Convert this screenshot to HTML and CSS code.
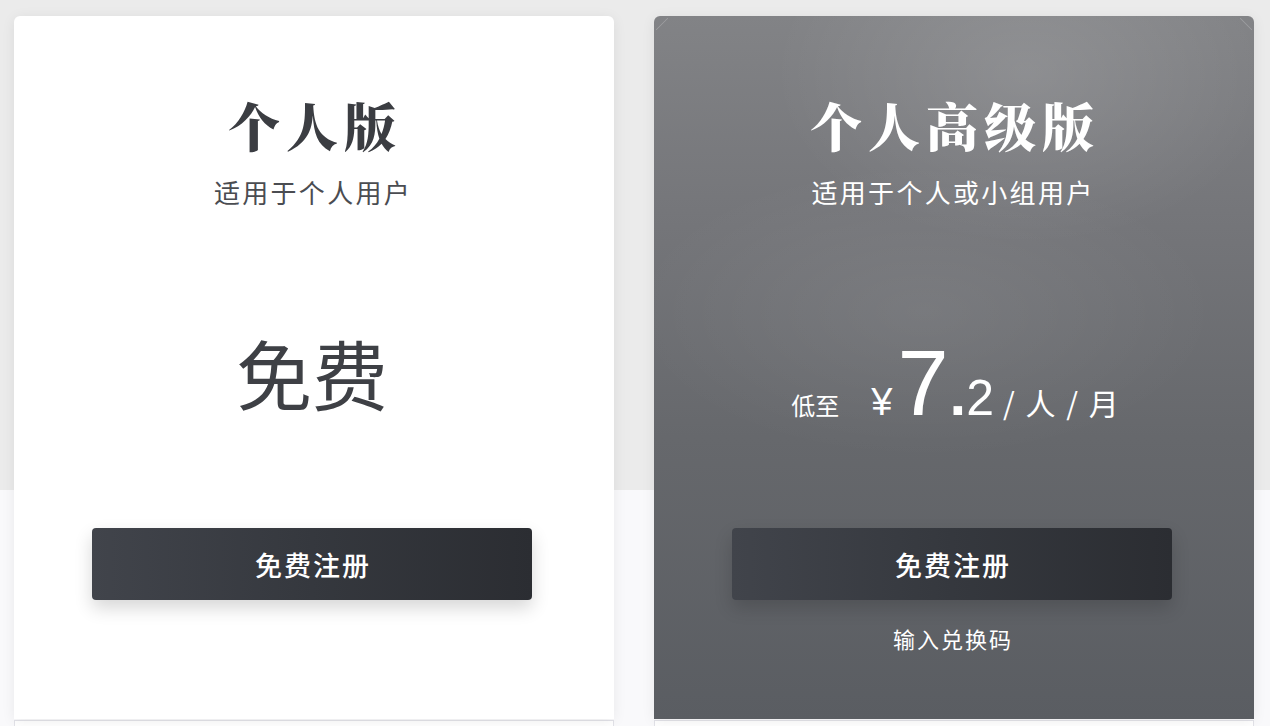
FILE: index.html
```html
<!DOCTYPE html>
<html lang="zh-CN">
<head>
<meta charset="utf-8">
<title>价格</title>
<link rel="stylesheet" href="styles.css">
</head>
<body>
<div class="page">
  <div class="plans">
    <div class="card card-light">
      <h2 class="title">个人版</h2>
      <p class="subtitle">适用于个人用户</p>
      <div class="price">
        <span class="free">免费</span>
      </div>
      <button class="btn">免费注册</button>
    </div>
    <div class="card card-dark">
      <span class="corner tl"></span><span class="corner tr"></span>
      <h2 class="title">个人高级版</h2>
      <p class="subtitle">适用于个人或小组用户</p>
      <div class="price">
        <span class="from">低至</span>
        <span class="yen">¥</span><span class="int">7</span><span class="dot">.</span><span class="dec">2</span>
        <span class="unit">/ 人 / 月</span>
      </div>
      <button class="btn">免费注册</button>
      <a class="redeem" href="#">输入兑换码</a>
    </div>
  </div>
  <div class="below">
    <div class="below-box"></div>
    <div class="below-box"></div>
  </div>
</div>
</body>
</html>
```
FILE: styles.css
```css
* { box-sizing: border-box; }
html, body { margin: 0; padding: 0; }
body {
  font-family: "Noto Sans CJK SC", "Noto Sans", sans-serif;
  background: linear-gradient(180deg, #ebebeb 0, #ebebeb 490px, #f9f9fb 490px, #f9f9fb 100%);
  min-height: 726px;
  overflow: hidden;
}
.page { padding: 16px 16px 0 14px; }
.plans {
  display: flex;
  gap: 40px;
}
.card {
  position: relative;
  width: 600px;
  height: 703px;
  border-radius: 6px 6px 0 0;
  display: flex;
  flex-direction: column;
  align-items: center;
  padding: 79px 4px 0 0;
  box-shadow: 0 2px 14px rgba(0, 0, 0, 0.07);
}
.card-light { background: #ffffff; color: #3b3d42; }
.card-dark {
  color: #ffffff;
  background:
    radial-gradient(ellipse 60% 35% at 62% 8%, rgba(255,255,255,0.12), rgba(255,255,255,0) 70%),
    radial-gradient(ellipse 70% 30% at 45% 42%, rgba(255,255,255,0.07), rgba(255,255,255,0) 70%),
    linear-gradient(180deg, #828386 0%, #747579 30%, #66686c 60%, #5a5d62 100%);
}
.corner {
  position: absolute;
  top: 2px;
  width: 12px;
  height: 12px;
}
.corner.tl { left: 2px; background: linear-gradient(135deg, transparent 45%, rgba(255,255,255,0.18) 50%, transparent 55%); }
.corner.tr { right: 2px; background: linear-gradient(45deg, transparent 45%, rgba(255,255,255,0.18) 50%, transparent 55%); }
.title {
  margin: 0;
  font-family: "Noto Serif CJK SC", "Noto Serif SC", "Noto Sans CJK SC", serif;
  font-weight: 900;
  font-size: 52px;
  line-height: 60px;
  letter-spacing: 6px;
  text-indent: 6px;
}
.subtitle {
  margin: 19px 0 0;
  font-size: 26px;
  line-height: 36px;
  letter-spacing: 2.3px;
  text-indent: 2px;
  font-weight: 400;
}
.card-light .subtitle { color: #4a4c51; }
.price {
  margin-top: 120px;
  height: 90px;
  display: flex;
  align-items: center;
  justify-content: center;
}
.free {
  font-size: 76px;
  line-height: 90px;
  font-weight: 400;
  color: #3e4045;
  margin-top: -6px;
}
.card-dark .price { align-items: baseline; padding-top: 8px; padding-left: 6px; }
.from { font-size: 24px; margin-right: 32px; }
.yen { font-family: "Liberation Sans", sans-serif; font-size: 38px; margin-right: 5px; }
.int { font-family: "Liberation Sans", sans-serif; font-size: 92px; line-height: 90px; }
.dot { font-family: "Liberation Sans", sans-serif; font-size: 60px; font-weight: 700; margin-left: 1px; }
.dec { font-family: "Liberation Sans", sans-serif; font-size: 50px; }
.unit { font-size: 30px; margin-left: 9px; word-spacing: 4px; }
.btn {
  margin-top: 108px;
  width: 440px;
  height: 72px;
  border: 0;
  border-radius: 4px;
  background: linear-gradient(90deg, #41444b 0%, #35383e 50%, #2b2d32 100%);
  color: #ffffff;
  font-family: "Noto Sans CJK SC", sans-serif;
  font-size: 27px;
  font-weight: 500;
  letter-spacing: 2px;
  text-indent: 2px;
  box-shadow: 0 8px 18px rgba(0, 0, 0, 0.16);
  cursor: pointer;
}
.redeem {
  margin-top: 22px;
  font-size: 22px;
  line-height: 32px;
  letter-spacing: 2px;
  text-indent: 2px;
  color: #ffffff;
  text-decoration: none;
}
.below {
  display: flex;
  gap: 40px;
  margin-top: 1px;
}
.below-box {
  width: 600px;
  height: 40px;
  background: #ffffff;
  border: 1px solid #e2e2e8;
}
```
